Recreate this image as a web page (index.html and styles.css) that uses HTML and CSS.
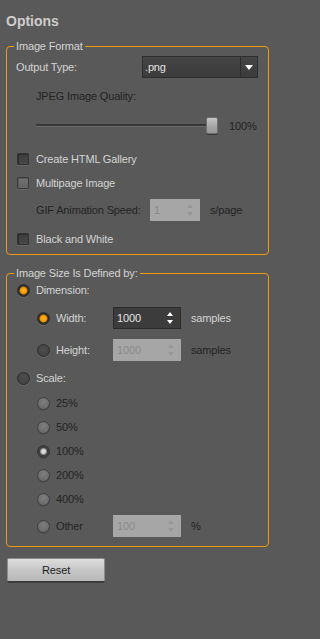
FILE: index.html
```html
<!DOCTYPE html>
<html>
<head>
<meta charset="utf-8">
<link rel="stylesheet" href="styles.css">
</head>
<body>
<div class="panel">
  <h1 class="title">Options</h1>

  <fieldset class="group group-format">
    <legend class="legend">Image Format</legend>

    <div class="row row-output">
      <span class="label label-output">Output Type:</span>
      <div class="select">
        <span class="select-value">.png</span>
        <span class="select-btn">
          <svg class="select-arrow" width="8" height="5" viewBox="0 0 8 5"><polygon points="0,0 8,0 4,5" fill="#ffffff"/></svg>
        </span>
      </div>
    </div>

    <div class="row row-jpeg indent disabled">JPEG Image Quality:</div>

    <div class="row row-slider indent">
      <div class="slider">
        <div class="track"></div>
        <div class="thumb"></div>
      </div>
      <span class="slider-value disabled">100%</span>
    </div>

    <div class="row check-row row-gallery">
      <span class="checkbox"></span><span>Create HTML Gallery</span>
    </div>

    <div class="row check-row row-multi">
      <span class="checkbox checkbox-hover"></span><span>Multipage Image</span>
    </div>

    <div class="row row-gif indent">
      <span class="label label-gif disabled">GIF Animation Speed:</span>
      <div class="spin spin-disabled spin-gif">
        <span class="spin-value">1</span>
        <svg class="spin-arrows" width="6" height="12" viewBox="0 0 6 12"><polygon points="3,0 6,4 0,4" /><polygon points="0,8 6,8 3,12" /></svg>
      </div>
      <span class="unit disabled">s/page</span>
    </div>

    <div class="row check-row row-bw">
      <span class="checkbox"></span><span>Black and White</span>
    </div>
  </fieldset>

  <fieldset class="group group-size">
    <legend class="legend">Image Size Is Defined by:</legend>

    <div class="row radio-row row-dim">
      <span class="radio radio-on"></span><span>Dimension:</span>
    </div>

    <div class="row radio-row sub row-width">
      <span class="radio radio-on"></span><span class="label label-dim">Width:</span>
      <div class="spin spin-active">
        <span class="spin-value">1000</span>
        <svg class="spin-arrows" width="6" height="12" viewBox="0 0 6 12"><polygon points="3,0 6,4 0,4" /><polygon points="0,8 6,8 3,12" /></svg>
      </div>
      <span class="unit">samples</span>
    </div>

    <div class="row radio-row sub row-height">
      <span class="radio"></span><span class="label label-dim">Height:</span>
      <div class="spin spin-disabled">
        <span class="spin-value">1000</span>
        <svg class="spin-arrows" width="6" height="12" viewBox="0 0 6 12"><polygon points="3,0 6,4 0,4" /><polygon points="0,8 6,8 3,12" /></svg>
      </div>
      <span class="unit disabled">samples</span>
    </div>

    <div class="row radio-row row-scale">
      <span class="radio"></span><span>Scale:</span>
    </div>

    <div class="row radio-row sub row-pct row-first disabled">
      <span class="radio radio-disabled"></span><span>25%</span>
    </div>
    <div class="row radio-row sub row-pct disabled">
      <span class="radio radio-disabled"></span><span>50%</span>
    </div>
    <div class="row radio-row sub row-pct disabled">
      <span class="radio radio-disabled-on"></span><span>100%</span>
    </div>
    <div class="row radio-row sub row-pct disabled">
      <span class="radio radio-disabled"></span><span>200%</span>
    </div>
    <div class="row radio-row sub row-pct disabled">
      <span class="radio radio-disabled"></span><span>400%</span>
    </div>

    <div class="row radio-row sub row-other disabled">
      <span class="radio radio-disabled"></span><span class="label label-dim">Other</span>
      <div class="spin spin-disabled">
        <span class="spin-value">100</span>
        <svg class="spin-arrows" width="6" height="12" viewBox="0 0 6 12"><polygon points="3,0 6,4 0,4" /><polygon points="0,8 6,8 3,12" /></svg>
      </div>
      <span class="unit">%</span>
    </div>
  </fieldset>

  <button class="btn-reset" type="button">Reset</button>
</div>
</body>
</html>
```

FILE: styles.css
```css
html, body {
  margin: 0;
  padding: 0;
  background: #595959;
}

body {
  width: 279px;
  height: 639px;
  overflow: hidden;
  font-family: "Liberation Sans", Arial, sans-serif;
  font-size: 11px;
  letter-spacing: -0.15px;
  color: #d4d4d4;
}

.panel {
  display: flex;
  flex-direction: column;
}

.title {
  margin: 0;
  padding: 13px 0 0 6px;
  font-size: 14px;
  line-height: 16px;
  font-weight: bold;
  color: #cdcdcd;
  letter-spacing: 0;
}

.group {
  margin: 0 10px 0 6px;
  padding: 0 0 0 0;
  border: 1px solid #f09a10;
  border-radius: 4px;
  min-inline-size: 0;
  display: flex;
  flex-direction: column;
}

.group-format {
  margin-top: 11px;
  padding-bottom: 8px;
}

.group-size {
  margin-top: 12px;
  padding-bottom: 9px;
}

.legend {
  margin-left: 7px;
  padding: 0 2px;
  line-height: 13px;
  color: #d4d4d4;
}

.row {
  display: flex;
  align-items: center;
  height: 14px;
  padding-left: 9px;
  line-height: 13px;
  white-space: nowrap;
}

.indent {
  padding-left: 29px;
}

.disabled {
  color: #232323;
}

.label {
  flex: none;
}

/* Output type */
.row-output {
  margin-top: 3px;
  height: 22px;
}

.label-output {
  width: 126px;
}

.select {
  display: flex;
  width: 116px;
  height: 22px;
  box-sizing: border-box;
  border: 1px solid #2d2d2d;
  background: linear-gradient(#454545, #3b3b3b);
}

.select-value {
  flex: 1;
  padding-left: 2px;
  line-height: 20px;
  color: #e2e2e2;
}

.select-btn {
  width: 16px;
  border-left: 1px solid #2d2d2d;
  display: flex;
  align-items: center;
  justify-content: center;
}

/* JPEG / slider */
.row-jpeg {
  margin-top: 11px;
}

.row-slider {
  margin-top: 14px;
  height: 18px;
}

.slider {
  position: relative;
  width: 182px;
  height: 18px;
}

.track {
  position: absolute;
  left: 0;
  right: 4px;
  top: 7px;
  height: 1px;
  background: #3c3c3c;
  border-top: 1px solid #333333;
  border-bottom: 1px solid #6a6a6a;
}

.thumb {
  position: absolute;
  right: 0;
  top: 0;
  width: 12px;
  height: 17px;
  box-sizing: border-box;
  border: 1px solid #6f6f6f;
  border-radius: 2px;
  background: linear-gradient(#c4c4c4, #a3a3a3 60%, #999999);
  box-shadow: 0 1px 0 #3a3a3a;
}

.slider-value {
  margin-left: 11px;
}

/* checkboxes */
.check-row {
  padding-left: 10px;
}

.checkbox {
  flex: none;
  width: 12px;
  height: 12px;
  box-sizing: border-box;
  border: 1px solid #333333;
  border-radius: 1px;
  background: linear-gradient(#3b3b3b, #494949);
  box-shadow: inset 1px 1px 0 #2e2e2e, 0 1px 0 #666666;
  margin-right: 7px;
}

.checkbox-hover {
  background: linear-gradient(#727272, #636363);
  box-shadow: inset 1px 1px 0 #5a5a5a, 0 1px 0 #666666;
  border-color: #3a3a3a;
}

.row-gallery {
  margin-top: 17px;
}

.row-multi {
  margin-top: 10px;
}

.row-gif {
  margin-top: 9px;
  height: 22px;
}

.label-gif {
  width: 114px;
}

.row-bw {
  margin-top: 11px;
}

/* spin boxes */
.spin {
  flex: none;
  position: relative;
  display: flex;
  align-items: center;
  width: 68px;
  height: 22px;
  box-sizing: border-box;
  padding: 0 7px 0 4px;
}

.spin-gif {
  width: 50px;
}

.spin-value {
  flex: 1;
}

.spin-active {
  border: 1px solid #2b2b2b;
  background: #3c3c3c;
  padding-left: 3px;
  color: #e4e4e4;
}

.spin-active .spin-arrows {
  fill: #ffffff;
}

.spin-disabled {
  background: #a6a6a6;
  color: #8a8a8a;
}

.spin-disabled .spin-arrows {
  fill: #979797;
}

.unit {
  margin-left: 10px;
}

/* radios */
.radio-row {
  padding-left: 10px;
}

.sub {
  padding-left: 30px;
}

.radio {
  flex: none;
  width: 13px;
  height: 13px;
  box-sizing: border-box;
  border-radius: 50%;
  border: 1px solid #2c2c2c;
  background: radial-gradient(circle at 50% 40%, #4e4e4e, #444444 70%);
  box-shadow: 0 1px 0 #6a6a6a;
  margin-right: 6px;
}

.radio-on {
  background: radial-gradient(circle, #ffb21e 0, #f6a010 2.5px, #d88400 3.5px, #2a2a2a 4.5px, #363636 6px);
}

.radio-disabled {
  border-color: #3e3e3e;
  background: radial-gradient(circle at 50% 35%, #7e7e7e, #6a6a6a 75%);
  box-shadow: 0 1px 0 #505050;
}

.radio-disabled-on {
  border-color: #333333;
  background: radial-gradient(circle, #e6e6e6 0, #cfcfcf 2px, #8f8f8f 3px, #3c3c3c 4px, #4a4a4a 6px);
  box-shadow: 0 1px 0 #505050;
}

.label-dim {
  width: 57px;
}

.row-dim {
  margin-top: 3px;
}

.row-width {
  margin-top: 10px;
  height: 22px;
}

.row-height {
  margin-top: 10px;
  height: 22px;
}

.row-scale {
  margin-top: 10px;
}

.row-pct {
  margin-top: 10px;
}

.row-first {
  margin-top: 11px;
}

.row-other {
  margin-top: 9px;
  height: 22px;
}

/* reset */
.btn-reset {
  align-self: flex-start;
  margin: 11px 0 0 7px;
  width: 98px;
  height: 24px;
  padding: 0;
  box-sizing: border-box;
  border: 1px solid #8e8e8e;
  border-bottom-color: #3a3a3a;
  border-radius: 2px;
  background: linear-gradient(#dddddd, #c6c6c6 50%, #b8b8b8);
  box-shadow: 0 1px 0 #3c3c3c;
  font-family: "Liberation Sans", Arial, sans-serif;
  font-size: 11px;
  letter-spacing: -0.1px;
  color: #1e1e1e;
}
```
